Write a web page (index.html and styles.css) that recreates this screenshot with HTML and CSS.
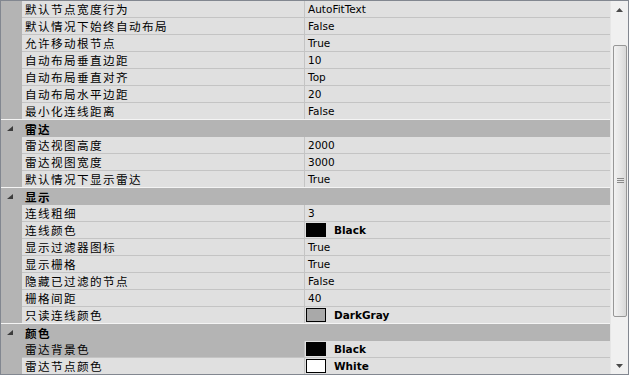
FILE: index.html
```html
<!DOCTYPE html>
<html lang="zh">
<head>
    <meta charset="UTF-8">
    <title>属性</title>
    <link rel="stylesheet" href="styles.css">
</head>
<body>

    <!-- 属性表格 -->
    <div class="property-panel">
        <div class="property-grid">
            <div class="row"><div class="gutter"></div><div class="name">默认节点宽度行为</div><div class="value">AutoFitText</div></div>
            <div class="row"><div class="gutter"></div><div class="name">默认情况下始终自动布局</div><div class="value">False</div></div>
            <div class="row"><div class="gutter"></div><div class="name">允许移动根节点</div><div class="value">True</div></div>
            <div class="row"><div class="gutter"></div><div class="name">自动布局垂直边距</div><div class="value">10</div></div>
            <div class="row"><div class="gutter"></div><div class="name">自动布局垂直对齐</div><div class="value">Top</div></div>
            <div class="row"><div class="gutter"></div><div class="name">自动布局水平边距</div><div class="value">20</div></div>
            <div class="row"><div class="gutter"></div><div class="name">最小化连线距离</div><div class="value">False</div></div>

            <div class="category">
                <div class="gutter"><svg class="expander" width="7" height="6" viewBox="0 0 7 6"><polygon points="6,0 6,5 0,5" fill="#3c3c3c"/></svg></div>
                <div class="category-title">雷达</div>
            </div>
            <div class="row"><div class="gutter"></div><div class="name">雷达视图高度</div><div class="value">2000</div></div>
            <div class="row"><div class="gutter"></div><div class="name">雷达视图宽度</div><div class="value">3000</div></div>
            <div class="row"><div class="gutter"></div><div class="name">默认情况下显示雷达</div><div class="value">True</div></div>

            <div class="category">
                <div class="gutter"><svg class="expander" width="7" height="6" viewBox="0 0 7 6"><polygon points="6,0 6,5 0,5" fill="#3c3c3c"/></svg></div>
                <div class="category-title">显示</div>
            </div>
            <div class="row"><div class="gutter"></div><div class="name">连线粗细</div><div class="value">3</div></div>
            <div class="row"><div class="gutter"></div><div class="name">连线颜色</div><div class="value"><span class="swatch swatch-black"></span><b>Black</b></div></div>
            <div class="row"><div class="gutter"></div><div class="name">显示过滤器图标</div><div class="value">True</div></div>
            <div class="row"><div class="gutter"></div><div class="name">显示栅格</div><div class="value">True</div></div>
            <div class="row"><div class="gutter"></div><div class="name">隐藏已过滤的节点</div><div class="value">False</div></div>
            <div class="row"><div class="gutter"></div><div class="name">栅格间距</div><div class="value">40</div></div>
            <div class="row"><div class="gutter"></div><div class="name">只读连线颜色</div><div class="value"><span class="swatch swatch-darkgray"></span><b>DarkGray</b></div></div>

            <div class="category">
                <div class="gutter"><svg class="expander" width="7" height="6" viewBox="0 0 7 6"><polygon points="6,0 6,5 0,5" fill="#3c3c3c"/></svg></div>
                <div class="category-title">颜色</div>
            </div>
            <div class="row selected"><div class="gutter"></div><div class="name">雷达背景色</div><div class="value"><span class="swatch swatch-black"></span><b>Black</b></div></div>
            <div class="row"><div class="gutter"></div><div class="name">雷达节点颜色</div><div class="value"><span class="swatch swatch-white"></span><b>White</b></div></div>
        </div>

        <div class="scrollbar">
            <div class="arrow">
                <svg width="7" height="4" viewBox="0 0 7 4"><polygon points="3.5,0 7,4 0,4" fill="#4a4a4a"/></svg>
            </div>
            <div class="track">
                <div class="thumb">
                    <svg width="7" height="6" viewBox="0 0 7 6">
                        <rect x="0" y="0" width="7" height="1" fill="#8a8a8a"/>
                        <rect x="0" y="2" width="7" height="1" fill="#8a8a8a"/>
                        <rect x="0" y="4" width="7" height="1" fill="#8a8a8a"/>
                    </svg>
                </div>
            </div>
            <div class="arrow">
                <svg width="7" height="4" viewBox="0 0 7 4"><polygon points="0,0 7,0 3.5,4" fill="#4a4a4a"/></svg>
            </div>
        </div>
    </div>

</body>
</html>
```

FILE: styles.css
```css
body {
    margin: 0;
    background-color: #f0f0f0;
    font-family: "DejaVu Sans", "Noto Sans CJK SC", sans-serif;
    font-size: 10.5px;
    line-height: 16px;
    color: #000;
}

.property-panel {
    width: 629px;
    height: 375px;
    box-sizing: border-box;
    border: 1px solid #828790;
    display: flex;
    overflow: hidden;
    background-color: #b4b4b4;
}

.property-grid {
    flex: 1;
    display: flex;
    flex-direction: column;
}

.row, .category {
    display: grid;
    grid-template-columns: 21px 283px 1fr;
    height: 17px;
    box-sizing: border-box;
    flex-shrink: 0;
}

.gutter {
    background-color: #b4b4b4;
    display: flex;
    align-items: center;
    justify-content: center;
}

.name, .value {
    background-color: #e0e0e0;
    border-bottom: 1px solid #c4c4c4;
    display: flex;
    align-items: center;
    white-space: nowrap;
    line-height: 16px;
}

.name {
    padding-left: 3px;
    border-right: 1px solid #c4c4c4;
    font-family: "Noto Sans CJK SC", sans-serif;
    font-size: 11.6px;
    letter-spacing: 1.4px;
}

.value {
    padding-left: 3px;
}

.selected .name {
    background-color: #b4b4b4;
}

.category {
    grid-template-columns: 21px 1fr;
    height: 18px;
    margin-top: -1px;
    background-color: #b4b4b4;
    border-top: 1px solid #f4f4f4;
}

.category-title {
    padding-left: 3px;
    display: flex;
    align-items: center;
    font-family: "Noto Sans CJK SC", sans-serif;
    font-weight: bold;
    font-size: 11.6px;
    letter-spacing: 1.4px;
    line-height: 16px;
}

.expander {
    margin-left: -2px;
    margin-top: 1px;
}

.swatch {
    display: inline-block;
    width: 18px;
    height: 12px;
    border: 1px solid #000;
    margin-left: -2px;
    margin-right: 8px;
}

.swatch-black { background-color: #000; }
.swatch-darkgray { background-color: #a9a9a9; }
.swatch-white { background-color: #fff; }

.value b {
    font-weight: bold;
}

/* 滚动条 */
.scrollbar {
    width: 17px;
    background-color: #f0f0f0;
    border-left: 1px solid #e6e6e6;
    display: flex;
    flex-direction: column;
}

.arrow {
    height: 17px;
    display: flex;
    align-items: center;
    justify-content: center;
}

.track {
    flex: 1;
    padding: 27px 1px 40px 2px;
    display: flex;
    flex-direction: column;
}

.thumb {
    flex: 1;
    border: 1px solid #979797;
    border-radius: 2px;
    background: linear-gradient(to right, #f2f2f2, #e4e4e4 60%, #d8d8d8);
    display: flex;
    align-items: center;
    justify-content: center;
}
```
